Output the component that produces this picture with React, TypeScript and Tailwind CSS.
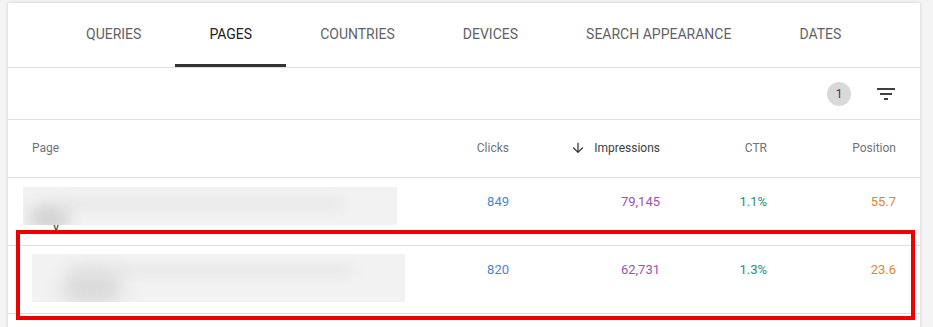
import React from 'react';

const tabs = ['QUERIES', 'PAGES', 'COUNTRIES', 'DEVICES', 'SEARCH APPEARANCE', 'DATES'];

const rows = [
  { clicks: '849', impressions: '79,145', ctr: '1.1%', position: '55.7', first: true },
  { clicks: '820', impressions: '62,731', ctr: '1.3%', position: '23.6', first: false },
];

const cols = 'grid grid-cols-[1fr_80px_151px_107px_129px] pl-[24px] pr-[24px]';

const FilterIcon = () => (
  <svg width="24" height="24" viewBox="0 0 24 24" fill="#3c4043">
    <path d="M10 18h4v-2h-4v2zM3 6v2h18V6H3zm3 7h12v-2H6v2z" />
  </svg>
);

const ArrowDown = () => (
  <svg width="16" height="16" viewBox="0 0 24 24" fill="#3c4043">
    <path d="M20 12l-1.41-1.41L13 16.17V4h-2v12.17l-5.58-5.59L4 12l8 8 8-8z" />
  </svg>
);

const BlurredUrl: React.FC<{ first: boolean }> = ({ first }) => (
  <div className={first ? 'relative -ml-[9px] mt-[9px] w-[374px] h-[38px]' : 'relative mt-[8px] w-[373px] h-[48px]'}>
    {first && (
      <span className="absolute left-[30px] top-[30px] text-[13px] text-[#3c4043]">y,</span>
    )}
    <div className="absolute inset-0 overflow-hidden bg-[#f2f2f2]">
      <div className="absolute left-[40px] top-[12px] w-[280px] h-[10px] rounded-full bg-[#e6e6e6] blur-[6px]" />
      {first ? (
        <div className="absolute left-[6px] top-[18px] w-[40px] h-[26px] rounded-full bg-[#d2d2d2] blur-[8px]" />
      ) : (
        <div className="absolute left-[30px] top-[18px] w-[60px] h-[32px] rounded-full bg-[#dadada] blur-[9px]" />
      )}
    </div>
  </div>
);

export default function App() {
  return (
    <div className="relative w-[933px] h-[327px] overflow-hidden bg-[#f4f4f4] pt-[3px] pl-[8px] font-['Roboto',sans-serif]">
      <div className="w-[912px] h-[340px] bg-white shadow-[0_0_3px_rgba(0,0,0,0.18)]">
        <div className="flex h-[65px] pl-[44px] border-b border-[#e0e0e0]">
          {tabs.map((t) => {
            const active = t === 'PAGES';
            return (
              <div key={t} className="relative flex items-center px-[34px] pb-[2px]">
                <span className={`text-[14px] ${active ? 'text-[#202124]' : 'text-[#5f6368]'}`}>{t}</span>
                {active && <div className="absolute left-0 right-0 bottom-0 h-[3px] bg-[#333333]" />}
              </div>
            );
          })}
        </div>

        <div className="flex items-center justify-end h-[52px] pr-[22px] border-b border-[#e0e0e0]">
          <div className="flex items-center justify-center w-[24px] h-[24px] rounded-full bg-[#d9d9d9] text-[12px] text-[#3c4043] mr-[23px]">
            1
          </div>
          <FilterIcon />
        </div>

        <div className={`${cols} h-[58px] items-center border-b border-[#e0e0e0] text-[12px] text-[#6f7378] pb-[1px]`}>
          <div>Page</div>
          <div className="text-right">Clicks</div>
          <div className="flex items-center justify-end gap-[8px] text-[#3c4043]">
            <ArrowDown />
            <span>Impressions</span>
          </div>
          <div className="text-right">CTR</div>
          <div className="text-right">Position</div>
        </div>

        {rows.map((r) => (
          <div key={r.clicks} className={`${cols} h-[68px] items-start border-b border-[#e0e0e0] text-[13px]`}>
            <div className="min-w-0">
              <BlurredUrl first={r.first} />
            </div>
            <div className="text-right pt-[14px] text-[#4a86d3]">{r.clicks}</div>
            <div className="text-right pt-[14px] text-[#9a52b5]">{r.impressions}</div>
            <div className="text-right pt-[14px] text-[#1f8f7c]">{r.ctr}</div>
            <div className="text-right pt-[14px] text-[#e0862c]">{r.position}</div>
          </div>
        ))}
      </div>

      <div className="absolute left-[16px] top-[230px] w-[899px] h-[90px] border-[4px] border-[#ee0000]" />
    </div>
  );
}
